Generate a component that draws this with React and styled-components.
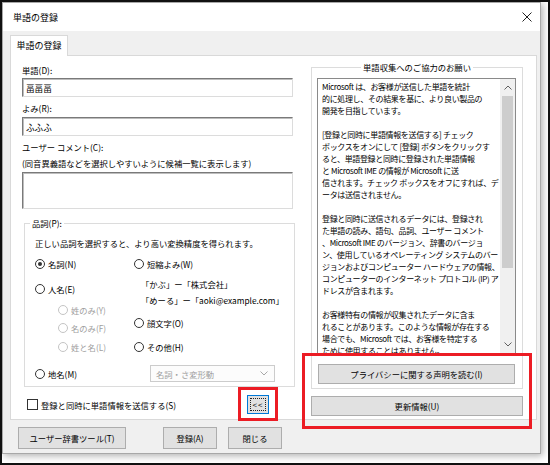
import React from 'react';
import styled, { createGlobalStyle } from 'styled-components';

const GlobalStyle = createGlobalStyle`
  html, body { margin: 0; padding: 0; background: #fff; }
  body {
    font-family: "Noto Sans CJK JP", "Noto Sans", sans-serif;
    font-size: 8.3px;
    color: #000;
  }
  * { box-sizing: border-box; }
`;

const Frame = styled.div`
  position: relative;
  width: 550px;
  height: 465px;
  border: 2px solid #111;
  background: #fff;
  overflow: hidden;
`;

const Dialog = styled.div`
  width: 539px;
  height: 452px;
  border: 1px solid #a8a8a8;
  background: #f0f0f0;
  box-shadow: 2px 2px 7px rgba(0, 0, 0, 0.3);
  display: flex;
  flex-direction: column;
`;

const TitleBar = styled.div`
  height: 28px;
  flex: none;
  background: #fff;
  display: flex;
  align-items: center;
  justify-content: space-between;
  padding: 0 8px 0 10px;
  font-size: 9px;
`;

const Body = styled.div`
  flex: 1;
  padding: 4px 0 0 7px;
  display: flex;
  flex-direction: column;
`;

const TabStrip = styled.div`
  height: 20px;
  display: flex;
`;

const Tab = styled.div`
  width: 58px;
  height: 21px;
  background: #fff;
  border: 1px solid #d9d9d9;
  border-bottom: none;
  line-height: 20px;
  text-align: center;
  font-size: 9px;
  position: relative;
  z-index: 1;
`;

const Panel = styled.div`
  width: 527px;
  height: 365px;
  background: #fff;
  border: 1px solid #d9d9d9;
  display: flex;
  padding-left: 11px;
`;

const LeftCol = styled.div`
  width: 273px;
  display: flex;
  flex-direction: column;
`;

const RightCol = styled.div`
  width: 212px;
  margin-left: 16px;
  display: flex;
  flex-direction: column;
`;

const Label = styled.div`
  height: 12px;
  line-height: 12px;
  margin-top: ${p => p.$mt || 0}px;
  white-space: nowrap;
`;

const TextInput = styled.div`
  width: 271px;
  height: ${p => p.$h || 19}px;
  margin-top: ${p => p.$mt || 0}px;
  border: 1px solid;
  border-color: #7a7a7a #dcdcdc #dcdcdc #7a7a7a;
  box-shadow: inset 1px 1px 0 #bdbdbd;
  background: #fff;
  padding: 2px 0 0 3px;
  line-height: 14px;
  font-size: 8.6px;
`;

const Group = styled.fieldset`
  margin: ${p => p.$mt || 0}px 0 0 ${p => p.$ml || 0}px;
  width: ${p => p.$w}px;
  height: ${p => p.$h}px;
  padding: 0 ${p => p.$px || 0}px;
  border: 1px solid #dcdcdc;
  min-width: 0;
  display: flex;
  flex-direction: column;
`;

const Legend = styled.legend`
  padding: 0 2px;
  margin: ${p => (p.$center ? '0 auto' : `0 0 0 ${p.$ml || 0}px`)};
  line-height: 12px;
  height: 12px;
`;

const RadioArea = styled.div`
  display: flex;
  margin-top: 9px;
`;

const RadioCol = styled.div`
  display: flex;
  flex-direction: column;
  width: ${p => p.$w}px;
`;

const RadioRow = styled.div`
  display: flex;
  align-items: center;
  height: 12px;
  line-height: 12px;
  margin-top: ${p => p.$mt || 0}px;
  padding-left: ${p => p.$indent || 0}px;
  color: ${p => (p.$disabled ? '#a0a0a0' : '#000')};
  white-space: nowrap;
`;

const RadioCircle = styled.span`
  width: 10px;
  height: 10px;
  border-radius: 50%;
  border: 1px solid ${p => (p.$disabled ? '#c4c4c4' : '#333')};
  background: #fff;
  display: inline-flex;
  align-items: center;
  justify-content: center;
  margin-right: 3px;
  flex: none;
  &::after {
    content: '';
    width: 4px;
    height: 4px;
    border-radius: 50%;
    background: #333;
    display: ${p => (p.$checked ? 'block' : 'none')};
  }
`;

const Note = styled.div`
  height: 12px;
  line-height: 12px;
  margin-top: ${p => p.$mt || 0}px;
  padding-left: 7px;
  white-space: nowrap;
`;

const PlaceRow = styled.div`
  display: flex;
  align-items: center;
  margin-top: 12px;
  height: 17px;
`;

const Select = styled.div`
  margin-left: auto;
  margin-right: 9px;
  width: 125px;
  height: 17px;
  border: 1px solid #cccccc;
  background: #fcfcfc;
  color: #a0a0a0;
  display: flex;
  align-items: center;
  justify-content: space-between;
  padding: 0 6px 0 5px;
`;

const CheckRow = styled.div`
  display: flex;
  align-items: center;
  justify-content: space-between;
  margin-top: 8px;
  margin-right: 26px;
  height: 19px;
  padding-left: 5px;
`;

const CheckLabel = styled.label`
  display: flex;
  align-items: center;
  white-space: nowrap;
`;

const CheckBox = styled.span`
  width: 11px;
  height: 11px;
  border: 1px solid #333;
  background: #fff;
  margin-right: 3px;
  flex: none;
`;

const Button = styled.div`
  width: ${p => p.$w}px;
  height: ${p => p.$h || 20}px;
  margin-top: ${p => p.$mt || 0}px;
  margin-left: ${p => p.$ml || 0}px;
  background: #e1e1e1;
  border: 1px solid ${p => (p.$focus ? '#0078d7' : '#adadad')};
  display: flex;
  align-items: center;
  justify-content: center;
  white-space: nowrap;
  position: relative;
  flex: none;
`;

const FocusRing = styled.span`
  position: absolute;
  inset: 2px;
  border: 1px dotted #222;
`;

const SmallText = styled.span`
  font-size: 8px;
  letter-spacing: 1px;
  position: relative;
`;

const InfoBox = styled.div`
  height: 276px;
  margin-top: 5px;
  margin-left: 5px;
  width: 199px;
  border: 1px solid #8a8a8a;
  background: #fff;
  display: flex;
`;

const InfoText = styled.div`
  flex: 1;
  min-width: 0;
  overflow: hidden;
  padding: 2px 0 0 4px;
  font-size: 8px;
  letter-spacing: -0.35px;
`;

const InfoLine = styled.div`
  height: 12px;
  line-height: 12px;
  white-space: nowrap;
`;

const ScrollBar = styled.div`
  width: 15px;
  flex: none;
  background: #f0f0f0;
  display: flex;
  flex-direction: column;
  align-items: center;
`;

const ScrollArrow = styled.div`
  height: 17px;
  width: 15px;
  display: flex;
  align-items: center;
  justify-content: center;
  flex: none;
`;

const ScrollTrack = styled.div`
  flex: 1;
  width: 100%;
  display: flex;
  justify-content: center;
`;

const ScrollThumb = styled.div`
  width: 11px;
  height: 172px;
  background: #cdcdcd;
`;

const ButtonRow = styled.div`
  display: flex;
  margin-top: 7px;
  padding-left: 8px;
`;

const Highlight = styled.div`
  position: absolute;
  left: ${p => p.$x}px;
  top: ${p => p.$y}px;
  width: ${p => p.$w}px;
  height: ${p => p.$h}px;
  border: 3px solid #ec1c24;
  pointer-events: none;
`;

const Chevron = ({ up, color = '#606060' }) => (
  <svg width="8" height="5" viewBox="0 0 8 5">
    <path
      d={up ? 'M0.5 4.5 L4 1 L7.5 4.5' : 'M0.5 0.5 L4 4 L7.5 0.5'}
      fill="none"
      stroke={color}
      strokeWidth="1"
    />
  </svg>
);

const Radio = ({ label, checked, disabled, mt, indent }) => (
  <RadioRow $mt={mt} $indent={indent} $disabled={disabled}>
    <RadioCircle $checked={checked} $disabled={disabled} />
    {label}
  </RadioRow>
);

const infoLines = [
  'Microsoft は、お客様が送信した単語を統計',
  '的に処理し、その結果を基に、より良い製品の',
  '開発を目指しています。',
  '',
  '[登録と同時に単語情報を送信する] チェック',
  'ボックスをオンにして [登録] ボタンをクリックす',
  'ると、単語登録と同時に登録された単語情報',
  'と Microsoft IME の情報が Microsoft に送',
  '信されます。チェック ボックスをオフにすれば、デ',
  'ータは送信されません。',
  '',
  '登録と同時に送信されるデータには、登録され',
  'た単語の読み、語句、品詞、ユーザー コメント',
  '、Microsoft IME のバージョン、辞書のバージョ',
  'ン、使用しているオペレーティング システムのバー',
  'ジョンおよびコンピューター ハードウェアの情報、',
  'コンピューターのインターネット プロトコル (IP) ア',
  'ドレスが含まれます。',
  '',
  'お客様特有の情報が収集されたデータに含ま',
  'れることがあります。このような情報が存在する',
  '場合でも、Microsoft では、お客様を特定する',
  'ために使用することはありません。',
];

export default function App() {
  return (
    <>
      <GlobalStyle />
      <Frame>
        <Dialog>
          <TitleBar>
            <span>単語の登録</span>
            <svg width="10" height="10" viewBox="0 0 10 10">
              <path d="M0.5 0.5 L9.5 9.5 M9.5 0.5 L0.5 9.5" stroke="#222" strokeWidth="1" />
            </svg>
          </TitleBar>
          <Body>
            <TabStrip>
              <Tab>単語の登録</Tab>
            </TabStrip>
            <Panel>
              <LeftCol>
                <Label $mt={8}>単語(D):</Label>
                <TextInput $mt={2}>畐畐畐</TextInput>
                <Label $mt={5}>よみ(R):</Label>
                <TextInput $mt={3}>ふふふ</TextInput>
                <Label $mt={5}>ユーザー コメント(C):</Label>
                <Label $mt={4}>(同音異義語などを選択しやすいように候補一覧に表示します)</Label>
                <TextInput $mt={3} $h={37} />
                <Group $mt={8} $ml={2} $w={271} $h={170} $px={10}>
                  <Legend $ml={-5}>品詞(P):</Legend>
                  <Label $mt={8}>正しい品詞を選択すると、より高い変換精度を得られます。</Label>
                  <RadioArea>
                    <RadioCol $w={99}>
                      <Radio label="名詞(N)" checked />
                      <Radio label="人名(E)" mt={13} />
                      <Radio label="姓のみ(Y)" mt={9} indent={23} disabled />
                      <Radio label="名のみ(F)" mt={6} indent={23} disabled />
                      <Radio label="姓と名(L)" mt={7} indent={23} disabled />
                    </RadioCol>
                    <RadioCol $w={150}>
                      <Radio label="短縮よみ(W)" />
                      <Note $mt={8}>「かぶ」ー「株式会社」</Note>
                      <Note $mt={4}>「めーる」ー「aoki@example.com」</Note>
                      <Radio label="顔文字(O)" mt={11} />
                      <Radio label="その他(H)" mt={12} />
                    </RadioCol>
                  </RadioArea>
                  <PlaceRow>
                    <Radio label="地名(M)" />
                    <Select>
                      <span>名詞・さ変形動</span>
                      <Chevron color="#a8a8a8" />
                    </Select>
                  </PlaceRow>
                </Group>
                <CheckRow>
                  <CheckLabel>
                    <CheckBox />
                    登録と同時に単語情報を送信する(S)
                  </CheckLabel>
                  <Button $w={22} $h={19} $focus>
                    <FocusRing />
                    <SmallText>&lt;&lt;</SmallText>
                  </Button>
                </CheckRow>
              </LeftCol>
              <RightCol>
                <Group $mt={5} $w={212} $h={328}>
                  <Legend $center>単語収集へのご協力のお願い</Legend>
                  <InfoBox>
                    <InfoText>
                      {infoLines.map((line, i) => (
                        <InfoLine key={i}>{line}</InfoLine>
                      ))}
                    </InfoText>
                    <ScrollBar>
                      <ScrollArrow>
                        <Chevron up />
                      </ScrollArrow>
                      <ScrollTrack>
                        <ScrollThumb />
                      </ScrollTrack>
                      <ScrollArrow>
                        <Chevron />
                      </ScrollArrow>
                    </ScrollBar>
                  </InfoBox>
                  <Button $mt={10} $ml={6} $w={197} $h={20}>
                    プライバシーに関する声明を読む(I)
                  </Button>
                </Group>
                <Button $mt={7} $w={212} $h={20}>
                  更新情報(U)
                </Button>
              </RightCol>
            </Panel>
            <ButtonRow>
              <Button $w={108} $h={22}>ユーザー辞書ツール(T)</Button>
              <Button $w={54} $h={22} $ml={37}>登録(A)</Button>
              <Button $w={54} $h={22} $ml={11}>閉じる</Button>
            </ButtonRow>
          </Body>
        </Dialog>
        <Highlight $x={236} $y={385} $w={40} $h={34} />
        <Highlight $x={300} $y={351} $w={230} $h={76} />
      </Frame>
    </>
  );
}
